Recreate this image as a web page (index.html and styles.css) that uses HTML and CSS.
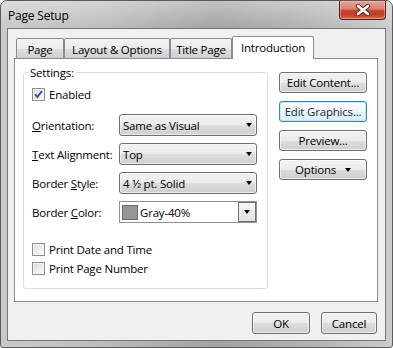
FILE: index.html
```html
<!DOCTYPE html>
<html>
<head>
<meta charset="utf-8">
<link rel="stylesheet" href="styles.css">
</head>
<body>
<div class="window">
  <div class="titlebar">
    <span class="title">Page Setup</span>
    <div class="close">
      <svg width="16" height="12" viewBox="0 0 16 12">
        <path d="M3 2 L13 10 M13 2 L3 10" stroke="#4a2a24" stroke-width="4.4" stroke-linecap="round" fill="none"/>
        <path d="M3 2 L13 10 M13 2 L3 10" stroke="#ffffff" stroke-width="2.6" stroke-linecap="round" fill="none"/>
      </svg>
    </div>
  </div>
  <div class="client">
    <div class="tabs">
      <div class="tab w-page">Page</div>
      <div class="tab w-layout">Layout &amp; Options</div>
      <div class="tab w-title">Title Page</div>
      <div class="tab active w-intro">Introduction</div>
    </div>
    <div class="panel">
      <div class="group">
        <span class="legend">Settings:</span>
        <div class="check first">
          <span class="box">
            <svg width="11" height="11" viewBox="0 0 11 11"><path d="M2 5.2 L4.3 8 L9 2" stroke="#2d4a9a" stroke-width="1.8" fill="none"/></svg>
          </span>
          <span>Enabled</span>
        </div>
        <div class="rows">
          <span class="lbl"><u>O</u>rientation:</span>
          <div class="select"><span>Same as Visual</span><span class="arrow"></span></div>
          <span class="lbl"><u>T</u>ext Alignment:</span>
          <div class="select"><span>Top</span><span class="arrow"></span></div>
          <span class="lbl">Border <u>S</u>tyle:</span>
          <div class="select"><span>4 ½ pt. Solid</span><span class="arrow"></span></div>
          <span class="lbl">Border <u>C</u>olor:</span>
          <div class="combo">
            <span class="swatch"></span>
            <span class="combo-text">Gray-40%</span>
            <span class="drop"><span class="arrow"></span></span>
          </div>
        </div>
        <div class="check gap-big">
          <span class="box"></span>
          <span>Print Date and Time</span>
        </div>
        <div class="check gap-small">
          <span class="box"></span>
          <span>Print Page Number</span>
        </div>
      </div>
      <div class="side">
        <button type="button" class="btn">Edit Content...</button>
        <button type="button" class="btn focus">Edit Graphics...</button>
        <button type="button" class="btn">Preview...</button>
        <button type="button" class="btn">Options <span class="arrow inline"></span></button>
      </div>
    </div>
    <div class="footer">
      <button type="button" class="btn ok">OK</button>
      <button type="button" class="btn cancel">Cancel</button>
    </div>
  </div>
</div>
</body>
</html>
```
FILE: styles.css
```css
* { box-sizing: border-box; }
html, body { margin: 0; background: #ffffff; }
body {
  font-family: "Open Sans", "Noto Sans", sans-serif;
  font-size: 11.5px;
  letter-spacing: -0.2px;
  line-height: 15px;
  color: #000;
}
.window {
  width: 393px;
  height: 348px;
  border: 1px solid #5a5a5a;
  border-radius: 7px 7px 3px 3px;
  overflow: hidden;
  display: flex;
  flex-direction: column;
  background:
    linear-gradient(to bottom, rgba(255,255,255,0.35), rgba(255,255,255,0) 28px),
    linear-gradient(to right, #c9c9c9 0%, #bdbdbd 25%, #a2a2a2 55%, #b2b2b2 78%, #cbcbcb 100%);
}
.titlebar {
  height: 27px;
  display: flex;
  justify-content: space-between;
  align-items: flex-start;
  flex: none;
}
.title {
  padding: 7px 0 0 7px;
  font-size: 12px;
  color: #000;
}
.close {
  width: 47px;
  height: 19px;
  margin-right: 6px;
  border: 1px solid #5b1d14;
  border-top: none;
  border-radius: 0 0 4px 4px;
  background: linear-gradient(#e6a393 0%, #d7806d 45%, #c24a33 52%, #c43d25 75%, #dd6447 100%);
  box-shadow: inset 0 0 0 1px rgba(255,210,200,0.45);
  display: flex;
  align-items: center;
  justify-content: center;
}
.client {
  margin: 0 6px 6px 6px;
  flex: 1;
  border: 1px solid #767676;
  background: #f0f0f0;
  padding: 7px 7px 0 6px;
  display: flex;
  flex-direction: column;
}
.tabs {
  display: flex;
  align-items: flex-end;
  height: 22px;
  margin-left: 2px;
}
.tab {
  height: 20px;
  border: 1px solid #898c95;
  border-bottom: none;
  border-radius: 2px 2px 0 0;
  padding-top: 3px;
  text-align: center;
  background: linear-gradient(#f3f3f3 0%, #ebebeb 50%, #dddddd 51%, #d0d0d0 100%);
  white-space: nowrap;
}
.tab.active {
  height: 23px;
  margin-bottom: -1px;
  background: #ffffff;
  position: relative;
  z-index: 1;
  padding-top: 3px;
}
.w-page { width: 48px; }
.w-layout { width: 106px; }
.w-title { width: 62px; }
.w-intro { width: 82px; }
.panel {
  width: 364px;
  height: 244px;
  border: 1px solid #898c95;
  background: #ffffff;
  display: flex;
  align-items: flex-start;
}
.group {
  margin: 13px 0 0 8px;
  width: 245px;
  height: 217px;
  border: 1px solid #d5dfe5;
  border-radius: 3px;
  padding: 0 10px 0 8px;
  display: flex;
  flex-direction: column;
}
.legend {
  align-self: flex-start;
  margin: -8px 0 0 -4px;
  padding: 0 2px;
  background: #fff;
}
.check {
  display: flex;
  align-items: center;
  height: 13px;
  gap: 4px;
}
.check.first { margin-top: 8px; }
.check.gap-big { margin-top: 20px; }
.check.gap-small { margin-top: 6px; }
.box {
  width: 13px;
  height: 13px;
  border: 1px solid #8e8f8f;
  background: linear-gradient(135deg, #dcdcdc 0%, #f2f2f2 70%, #fbfbfb 100%);
  box-shadow: inset 0 0 0 1px #f4f4f4;
  display: flex;
  align-items: center;
  justify-content: center;
  flex: none;
}
.rows {
  margin-top: 13px;
  display: grid;
  grid-template-columns: 87px 138px;
  grid-auto-rows: 22px;
  row-gap: 7px;
  align-items: center;
}
.lbl { white-space: nowrap; }
.select {
  height: 22px;
  border: 1px solid #707070;
  border-radius: 3px;
  background: linear-gradient(#f2f2f2 0%, #ebebeb 50%, #dddddd 51%, #cfcfcf 100%);
  box-shadow: inset 0 0 0 1px rgba(255,255,255,0.55);
  display: flex;
  align-items: center;
  justify-content: space-between;
  padding: 0 3px 0 3px;
  white-space: nowrap;
}
.arrow {
  width: 0;
  height: 0;
  border-left: 3.5px solid transparent;
  border-right: 3.5px solid transparent;
  border-top: 4px solid #000;
  margin-right: 1px;
}
.arrow.inline {
  display: inline-block;
  vertical-align: middle;
  margin: 0 0 2px 6px;
}
.combo {
  height: 22px;
  border: 1px solid #8f8f8f;
  background: #fff;
  display: flex;
  align-items: center;
  padding: 1px;
}
.swatch {
  width: 16px;
  height: 15px;
  margin-left: 1px;
  border: 1px solid #6d6d6d;
  background: #969696;
  flex: none;
}
.combo-text { margin-left: 2px; }
.drop {
  margin-left: auto;
  width: 18px;
  height: 20px;
  margin-right: -1px;
  border: 1px solid #707070;
  background: linear-gradient(#f7f7f7, #e2e2e2);
  display: flex;
  align-items: center;
  justify-content: center;
}
.drop .arrow { margin: 0; }
.side {
  margin: 13px 0 0 11px;
  display: flex;
  flex-direction: column;
  gap: 8px;
}
.btn {
  font: inherit;
  letter-spacing: inherit;
  color: #000;
  padding: 0;
  width: 88px;
  height: 21px;
  border: 1px solid #707070;
  border-radius: 3px;
  background: linear-gradient(#f2f2f2 0%, #ebebeb 50%, #dddddd 51%, #cfcfcf 100%);
  box-shadow: inset 0 0 0 1px rgba(255,255,255,0.6);
  text-align: center;
  white-space: nowrap;
}
.btn.focus {
  border-color: #3c7fb1;
  background: linear-gradient(#fafdff 0%, #f0f8fe 50%, #e4f3fd 51%, #d9eefb 100%);
  box-shadow: inset 0 0 0 1px #c8e6fa;
  color: #2a2a2a;
}
.footer {
  margin-top: 10px;
  display: flex;
  justify-content: flex-end;
  gap: 11px;
  padding-right: 1px;
}
.btn.ok { width: 58px; height: 22px; }
.btn.cancel { width: 56px; height: 22px; }
```
